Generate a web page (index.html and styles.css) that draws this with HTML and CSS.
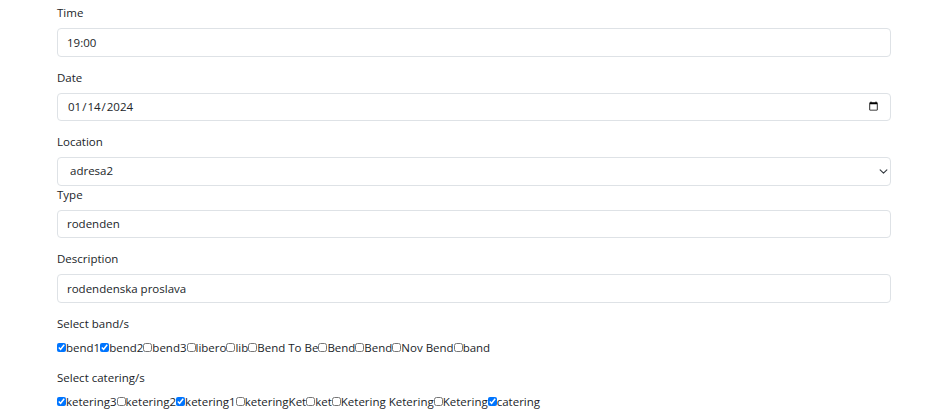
FILE: index.html
```html
<!DOCTYPE html>
<html>
<head>
    <title>Edit Event</title>
    <link rel="stylesheet" href="styles.css">
</head>
<body>
    <div class="container">
        <form class="event-form">
            <div class="field">
                <label class="form-label" for="time">Time</label>
                <input class="form-control" id="time" type="text" value="19:00">
            </div>
            <div class="field">
                <label class="form-label" for="date">Date</label>
                <input class="form-control" id="date" type="date" value="2024-01-14">
            </div>
            <div class="field-tight">
                <label class="form-label" for="location">Location</label>
                <div class="select-wrap">
                    <select class="form-select" id="location">
                        <option>adresa1</option>
                        <option selected>adresa2</option>
                    </select>
                    <svg class="chevron" width="9" height="9" viewBox="0 0 16 16"><path d="M2 5l6 6 6-6" fill="none" stroke="#343a40" stroke-width="2" stroke-linecap="round" stroke-linejoin="round"/></svg>
                </div>
            </div>
            <div class="field">
                <label class="form-label" for="type">Type</label>
                <input class="form-control" id="type" type="text" value="rodenden">
            </div>
            <div class="field">
                <label class="form-label" for="description">Description</label>
                <input class="form-control" id="description" type="text" value="rodendenska proslava">
            </div>
            <div class="field">
                <label class="form-label">Select band/s</label>
                <div class="check-row">
                    <label><input type="checkbox" checked>bend1</label>
                    <label><input type="checkbox" checked>bend2</label>
                    <label><input type="checkbox">bend3</label>
                    <label><input type="checkbox">libero</label>
                    <label><input type="checkbox">lib</label>
                    <label><input type="checkbox">Bend To Be</label>
                    <label><input type="checkbox">Bend</label>
                    <label><input type="checkbox">Bend</label>
                    <label><input type="checkbox">Nov Bend</label>
                    <label><input type="checkbox">band</label>
                </div>
            </div>
            <div class="field">
                <label class="form-label">Select catering/s</label>
                <div class="check-row">
                    <label><input type="checkbox" checked>ketering3</label>
                    <label><input type="checkbox">ketering2</label>
                    <label><input type="checkbox" checked>ketering1</label>
                    <label><input type="checkbox">keteringKet</label>
                    <label><input type="checkbox">ket</label>
                    <label><input type="checkbox">Ketering Ketering</label>
                    <label><input type="checkbox">Ketering</label>
                    <label><input type="checkbox" checked>catering</label>
                </div>
            </div>
        </form>
    </div>
</body>
</html>
```

FILE: styles.css
```css
body {
    margin: 0;
    background: #fff;
    color: #212529;
    font-family: "Open Sans", "Noto Sans", sans-serif;
    font-size: 11.5px;
    line-height: 18px;
}
.container {
    padding: 4px 52px 0 57px;
}
.field {
    margin-bottom: 12px;
}
.field-tight {
    margin-bottom: 0;
}
.form-label {
    display: inline-block;
    margin-bottom: 6px;
}
.form-control,
.form-select {
    display: block;
    box-sizing: border-box;
    width: 100%;
    height: 28.5px;
    padding: 4px 9px;
    font-family: inherit;
    font-size: 11.5px;
    line-height: 18px;
    color: #212529;
    background: #fff;
    border: 1px solid #dee2e6;
    border-radius: 4px;
    outline: none;
}
.form-select {
    appearance: none;
    padding-left: 12px;
}
.select-wrap {
    position: relative;
}
.chevron {
    position: absolute;
    right: 3px;
    top: 10px;
    pointer-events: none;
}
.check-row {
    display: flex;
    flex-wrap: wrap;
}
.check-row label {
    display: inline-flex;
    align-items: center;
}
.check-row input {
    width: 9px;
    height: 9px;
    margin: 0;
}
```
